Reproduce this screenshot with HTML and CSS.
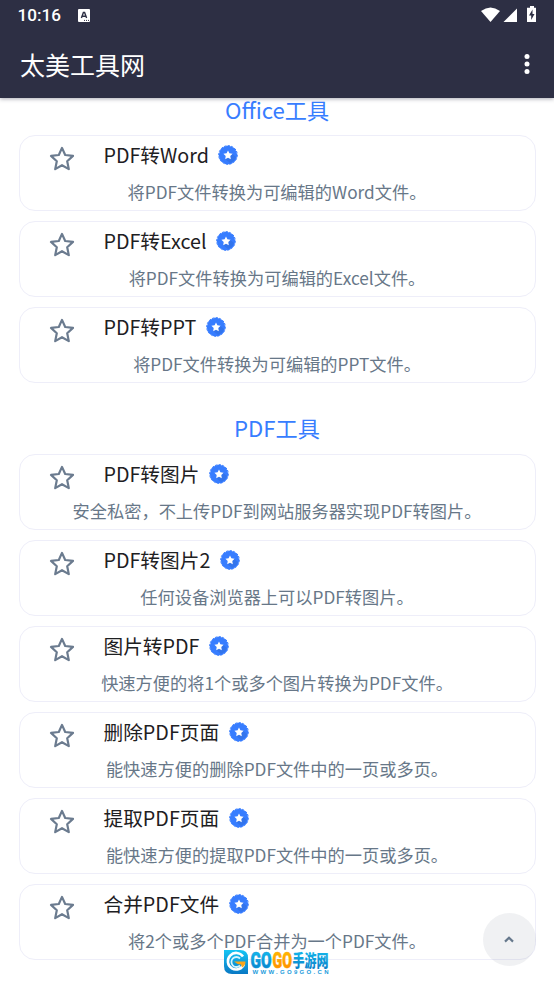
FILE: index.html
```html
<!DOCTYPE html>
<html lang="zh-CN">
<head>
<meta charset="utf-8">
<title>太美工具网</title>
<link rel="stylesheet" href="styles.css">
</head>
<body>
<svg class="defs" aria-hidden="true">
  <symbol id="star" viewBox="0 0 26 26"><path d="M13 1.900l3.200 7.100 7.800.9-5.800 5.300 1.600 7.900-6.800-3.900-6.800 3.900 1.600-7.900L2 9.900 9.800 9z" fill="none" stroke="#6b7b8f" stroke-width="2.200" stroke-linejoin="round"/></symbol>
  <symbol id="badge" viewBox="0 0 20 20"><circle cx="10" cy="10" r="9.200" fill="#377dff"/><circle cx="10" cy="10" r="9.300" fill="none" stroke="#377dff" stroke-width="1" stroke-dasharray="2.400 1.200"/><path d="M13 8l5 4a9 9 0 0 1-6 6L7 14z" fill="#3274ec"/><path d="M10 5.400l1.400 2.900 3.200.4-2.300 2.300.5 3.200-2.800-1.500-2.800 1.500.5-3.200-2.300-2.300 3.200-.4z" fill="#fff"/></symbol>
</svg>
<header class="top">
  <div class="status">
    <span class="time">10:16</span>
    <svg class="note" viewBox="0 0 12 13"><rect width="12" height="13" rx="1" fill="#fff"/><path d="M3.400 9L5.400 3.500h1.200L8.600 9M4.200 7.200h3.600" fill="none" stroke="#2d2f44" stroke-width="1.400"/><path d="M6 11.400h1M8 11.400h1M10 11.400h1" stroke="#2d2f44"/></svg>
    <svg class="signals" viewBox="0 0 56 18"><path d="M0 5Q9.500-2 19 5L9.500 16z" fill="#fff"/><path d="M22.500 16L36 2.600V16z" fill="#fff"/><path d="M49 0h4v1.700h2V16h-9V1.700h3z" fill="#fff"/><path d="M51.500 3.500l-3.500 6h2.200v4.500l3.300-6h-2z" fill="#2d2f44"/></svg>
  </div>
  <div class="toolbar">
    <h1>太美工具网</h1>
    <svg class="more" viewBox="0 0 6 20"><circle cx="3" cy="2.600" r="2.500"/><circle cx="3" cy="10" r="2.500"/><circle cx="3" cy="17.400" r="2.500"/></svg>
  </div>
</header>
<main>
  <section>
    <h2>Office工具</h2>
    <article class="card"><svg class="star"><use href="#star"/></svg><h3>PDF转Word<svg class="badge"><use href="#badge"/></svg></h3><p>将PDF文件转换为可编辑的Word文件。</p></article>
    <article class="card"><svg class="star"><use href="#star"/></svg><h3>PDF转Excel<svg class="badge"><use href="#badge"/></svg></h3><p>将PDF文件转换为可编辑的Excel文件。</p></article>
    <article class="card"><svg class="star"><use href="#star"/></svg><h3>PDF转PPT<svg class="badge"><use href="#badge"/></svg></h3><p>将PDF文件转换为可编辑的PPT文件。</p></article>
  </section>
  <section>
    <h2>PDF工具</h2>
    <article class="card"><svg class="star"><use href="#star"/></svg><h3>PDF转图片<svg class="badge"><use href="#badge"/></svg></h3><p>安全私密，不上传PDF到网站服务器实现PDF转图片。</p></article>
    <article class="card"><svg class="star"><use href="#star"/></svg><h3>PDF转图片2<svg class="badge"><use href="#badge"/></svg></h3><p>任何设备浏览器上可以PDF转图片。</p></article>
    <article class="card"><svg class="star"><use href="#star"/></svg><h3>图片转PDF<svg class="badge"><use href="#badge"/></svg></h3><p>快速方便的将1个或多个图片转换为PDF文件。</p></article>
    <article class="card"><svg class="star"><use href="#star"/></svg><h3>删除PDF页面<svg class="badge"><use href="#badge"/></svg></h3><p>能快速方便的删除PDF文件中的一页或多页。</p></article>
    <article class="card"><svg class="star"><use href="#star"/></svg><h3>提取PDF页面<svg class="badge"><use href="#badge"/></svg></h3><p>能快速方便的提取PDF文件中的一页或多页。</p></article>
    <article class="card"><svg class="star"><use href="#star"/></svg><h3>合并PDF文件<svg class="badge"><use href="#badge"/></svg></h3><p>将2个或多个PDF合并为一个PDF文件。</p></article>
  </section>
</main>
<div class="to-top"><svg viewBox="0 0 10 7"><path d="M1 5.600L5 1.800l4 3.800" fill="none" stroke="#66788c" stroke-width="2.200"/></svg></div>
<svg class="watermark" viewBox="0 0 108 28">
  <defs>
    <linearGradient id="blue" x1="0" y1="0" x2="0" y2="1"><stop offset="0" stop-color="#16c5f4"/><stop offset="1" stop-color="#0878c4"/></linearGradient>
    <linearGradient id="orange" x1="0" y1="0" x2="0" y2="1"><stop offset="0" stop-color="#ffc400"/><stop offset="1" stop-color="#ff8500"/></linearGradient>
  </defs>
  <path d="M1 2h16q8 0 8 8v16H9q-8 0-8-8z" fill="url(#blue)"/>
  <path d="M20 8.500A8.300 8.300 0 1 0 21 16" fill="none" stroke="#fff" stroke-width="2.600"/>
  <path d="M17 10.500a5 5 0 1 0 0 7" fill="none" stroke="#d5f4fd" stroke-width="1.800"/>
  <path d="M11 13.500h11.500q0 4-3.500 6l-1-3q-4 0-7-3z" fill="#f9a51a"/>
  <g class="brand">
    <text x="27.500" y="19.500" textLength="21" lengthAdjust="spacingAndGlyphs" fill="url(#blue)" stroke="#0a9ade">GO</text>
    <text x="49.500" y="19.500" textLength="19.500" lengthAdjust="spacingAndGlyphs" fill="url(#orange)" stroke="#ffa200">GO</text>
  </g>
  <text class="brand-cn" x="69.500" y="18.500" textLength="36" lengthAdjust="spacingAndGlyphs" fill="url(#blue)">手游网</text>
  <text class="brand-url" x="29.500" y="26" textLength="76" fill="#1a9bdc">WWW.GO9GO.CN</text>
</svg>
</body>
</html>
```
FILE: styles.css
```css
* { box-sizing: border-box; }
body {
  margin: 0;
  height: 984px;
  overflow: hidden;
  background: #fff;
  font-family: "Noto Sans CJK SC", sans-serif;
}
h1, h2, h3, p { margin: 0; font-weight: 400; white-space: nowrap; }
svg { display: block; flex: none; }
.defs { position: absolute; width: 0; height: 0; }
.top {
  position: relative;
  height: 98px;
  background: #2d2f44;
  color: #fff;
  box-shadow: 0 1px 4px rgba(45, 47, 68, .4);
}
.status { display: flex; height: 31px; padding: 0 17px 0 17.500px; }
.time { width: 60px; font: 500 17.100px/31px Roboto, sans-serif; }
.note { width: 12px; height: 13px; margin-top: 8.500px; }
.signals { width: 56px; height: 18px; margin: 6px 0 0 auto; }
.toolbar { display: flex; justify-content: space-between; height: 67px; padding: 14.500px 24px 0 20px; }
.toolbar h1 { font-size: 25px; line-height: 36px; }
.more { width: 6px; height: 20px; margin-top: 8.500px; fill: #fff; }
main { padding: 0 18.500px; }
section { margin-bottom: 30.200px; }
h2 { height: 37px; color: #377dff; font-size: 22.150px; line-height: 22px; text-align: center; }
section + section h2 { height: 40.200px; line-height: 29px; }
.card {
  display: grid;
  grid-template-columns: 84px 1fr;
  grid-template-rows: 39px 34px;
  height: 76px;
  margin-bottom: 10.080px;
  border: 1.200px solid #eeeef9;
  border-radius: 16px;
}
.star { width: 26px; height: 26px; margin: 10.300px 0 0 29.800px; }
h3 { display: flex; color: #1e2022; font-size: 19.700px; line-height: 37px; }
.badge { width: 20px; height: 20px; margin: 9px 0 0 9.500px; }
.card p { grid-column: 1 / -1; color: #677788; font-size: 17.230px; line-height: 34px; text-align: center; }
.to-top {
  position: absolute;
  left: 482.500px;
  top: 912.500px;
  display: flex;
  align-items: center;
  justify-content: center;
  width: 53px;
  height: 53px;
  border-radius: 50%;
  background: rgba(103, 119, 136, .1);
}
.to-top svg { width: 10px; height: 7px; }
.watermark { position: absolute; left: 223px; top: 947.500px; width: 108px; height: 28px; overflow: visible; }
.brand { font: 900 22px Roboto, sans-serif; stroke-width: .6px; }
.brand-cn { font-size: 17px; font-weight: 900; }
.brand-url { font: 700 6px "Liberation Sans", sans-serif; }
```
